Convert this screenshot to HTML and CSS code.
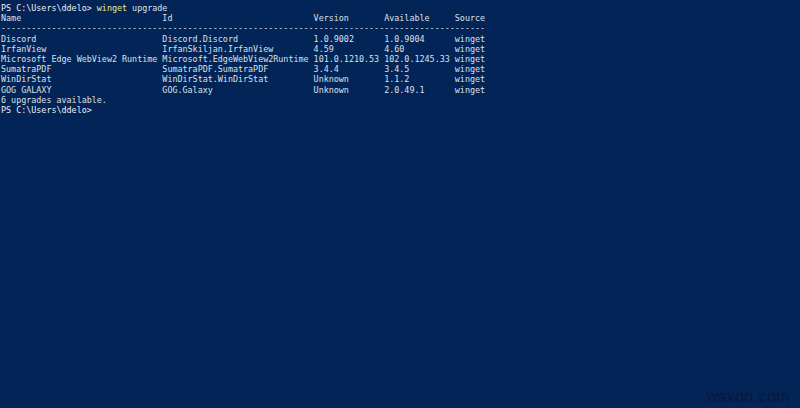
FILE: index.html
```html
<!DOCTYPE html>
<html>
<head>
<meta charset="utf-8">
<link rel="stylesheet" href="styles.css">
</head>
<body>
<div class="console">
<pre class="out"><span class="prompt">PS C:\Users\ddelo&gt;</span> <span class="cmd">winget</span> upgrade
Name                            Id                            Version       Available     Source
------------------------------------------------------------------------------------------------
Discord                         Discord.Discord               1.0.9002      1.0.9004      winget
IrfanView                       IrfanSkiljan.IrfanView        4.59          4.60          winget
Microsoft Edge WebView2 Runtime Microsoft.EdgeWebView2Runtime 101.0.1210.53 102.0.1245.33 winget
SumatraPDF                      SumatraPDF.SumatraPDF         3.4.4         3.4.5         winget
WinDirStat                      WinDirStat.WinDirStat         Unknown       1.1.2         winget
GOG GALAXY                      GOG.Galaxy                    Unknown       2.0.49.1      winget
6 upgrades available.
<span class="prompt">PS C:\Users\ddelo&gt;</span></pre>
<div class="mark">wsxdn.com</div>
</div>
</body>
</html>
```
FILE: styles.css
```css
html, body {
  margin: 0;
  padding: 0;
  background: #022456;
}
.console {
  width: 800px;
  height: 408px;
  position: relative;
  background: #022456;
  overflow: hidden;
}
.out {
  margin: 0;
  padding: 3px 0 0 1px;
  font-family: "DejaVu Sans Mono", monospace;
  font-size: 8.4px;
  line-height: 10.2px;
  color: #dde0e8;
  white-space: pre;
}
.prompt { color: #eef0f4; }
.cmd { color: #ece6a0; }
.mark {
  position: absolute;
  right: 10px;
  bottom: 2px;
  font-family: "Liberation Sans", sans-serif;
  font-size: 16px;
  color: #0a1836;
  letter-spacing: 0.4px;
}
```
